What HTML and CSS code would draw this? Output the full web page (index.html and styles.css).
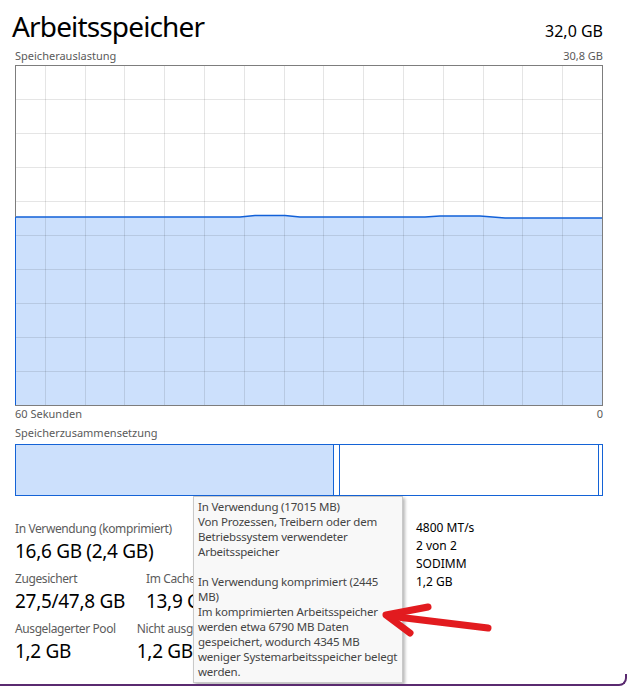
FILE: index.html
```html
<!DOCTYPE html>
<html lang="de">
<head>
<meta charset="utf-8">
<title>Arbeitsspeicher</title>
<link rel="stylesheet" href="styles.css">
</head>
<body>
<div class="window">
  <header class="head">
    <h1 class="title">Arbeitsspeicher</h1>
    <span class="total">32,0 GB</span>
  </header>
  <div class="cap-row top-cap"><span>Speicherauslastung</span><span>30,8 GB</span></div>
  <svg class="graph" width="588" height="341" viewBox="0 0 588 341" aria-label="Speicherauslastung Verlauf">
    <rect x="0" y="0" width="588" height="341" fill="#ffffff"/>
    <path class="fill" d="M0.5 152 L225 152 L240 150.5 L270 150.5 L285 152 L410 152 L425 151 L465 151 L490 153 L587.5 153 L587.5 340.5 L0.5 340.5 Z"/>
    <g class="grid">
      <line x1="30.5" y1="0" x2="30.5" y2="341"/>
      <line x1="70.5" y1="0" x2="70.5" y2="341"/>
      <line x1="109.5" y1="0" x2="109.5" y2="341"/>
      <line x1="149.5" y1="0" x2="149.5" y2="341"/>
      <line x1="189.5" y1="0" x2="189.5" y2="341"/>
      <line x1="229.5" y1="0" x2="229.5" y2="341"/>
      <line x1="269.5" y1="0" x2="269.5" y2="341"/>
      <line x1="308.5" y1="0" x2="308.5" y2="341"/>
      <line x1="348.5" y1="0" x2="348.5" y2="341"/>
      <line x1="388.5" y1="0" x2="388.5" y2="341"/>
      <line x1="428.5" y1="0" x2="428.5" y2="341"/>
      <line x1="468.5" y1="0" x2="468.5" y2="341"/>
      <line x1="507.5" y1="0" x2="507.5" y2="341"/>
      <line x1="547.5" y1="0" x2="547.5" y2="341"/>
      <line x1="0" y1="34.5" x2="588" y2="34.5"/>
      <line x1="0" y1="68.5" x2="588" y2="68.5"/>
      <line x1="0" y1="102.5" x2="588" y2="102.5"/>
      <line x1="0" y1="136.5" x2="588" y2="136.5"/>
      <line x1="0" y1="170.5" x2="588" y2="170.5"/>
      <line x1="0" y1="204.5" x2="588" y2="204.5"/>
      <line x1="0" y1="238.5" x2="588" y2="238.5"/>
      <line x1="0" y1="272.5" x2="588" y2="272.5"/>
      <line x1="0" y1="306.5" x2="588" y2="306.5"/>
    </g>
    <path class="line" d="M0.5 152 L225 152 L240 150.5 L270 150.5 L285 152 L410 152 L425 151 L465 151 L490 153 L587.5 153"/>
    <rect class="frame" x="0.5" y="0.5" width="587" height="340"/>
    <line class="edge" x1="0.5" y1="152" x2="0.5" y2="340"/>
  </svg>
  <div class="cap-row axis"><span>60 Sekunden</span><span>0</span></div>
  <div class="cap-row comp-label"><span>Speicherzusammensetzung</span></div>
  <div class="compbar">
    <div class="seg inuse"></div>
    <div class="seg modified"></div>
    <div class="seg standby"></div>
    <div class="seg free"></div>
  </div>
  <section class="details">
    <div class="stats">
      <div class="row">
        <div class="stat"><div class="label">In Verwendung (komprimiert)</div><div class="value">16,6 GB (2,4 GB)</div></div>
      </div>
      <div class="row">
        <div class="stat"><div class="label">Zugesichert</div><div class="value">27,5/47,8 GB</div></div>
        <div class="stat"><div class="label">Im Cache</div><div class="value">13,9 GB</div></div>
      </div>
      <div class="row">
        <div class="stat"><div class="label">Ausgelagerter Pool</div><div class="value">1,2 GB</div></div>
        <div class="stat"><div class="label">Nicht ausgelagerter Pool</div><div class="value">1,2 GB</div></div>
      </div>
    </div>
    <ul class="specs">
      <li>4800 MT/s</li>
      <li>2 von 2</li>
      <li>SODIMM</li>
      <li>1,2 GB</li>
    </ul>
  </section>
  <div class="tooltip">In Verwendung (17015 MB)<br>Von Prozessen, Treibern oder dem<br>Betriebssystem verwendeter<br>Arbeitsspeicher<br><br>In Verwendung komprimiert (2445<br>MB)<br>Im komprimierten Arbeitsspeicher<br>werden etwa 6790 MB Daten<br>gespeichert, wodurch 4345 MB<br>weniger Systemarbeitsspeicher belegt<br>werden.</div>
  <svg class="arrow" width="115" height="40" viewBox="0 0 115 40" aria-hidden="true">
    <path d="M48 7 L6 15 L30 33" />
    <path d="M9 16 L108 28" />
  </svg>
  <div class="frame-edge"></div>
</div>
</body>
</html>
```

FILE: styles.css
```css
html, body {
  margin: 0;
  padding: 0;
  background: #ffffff;
}

body {
  font-family: "Segoe UI", "Noto Sans", "Open Sans", sans-serif;
  color: #000000;
}

.window {
  position: relative;
  width: 627px;
  height: 686px;
  box-sizing: border-box;
  padding: 8px 24px 0 15px;
  overflow: hidden;
}

.head {
  display: flex;
  justify-content: space-between;
  align-items: baseline;
  margin-left: -3px;
}

.title {
  margin: 0;
  font-size: 28px;
  font-weight: 400;
  line-height: 36px;
  letter-spacing: -0.85px;
}

.total {
  font-size: 16px;
}

.cap-row {
  display: flex;
  justify-content: space-between;
  font-size: 11px;
  line-height: 14px;
  color: #5a5a5a;
}

.top-cap {
  margin-top: 5px;
  margin-bottom: 2px;
}

.graph {
  display: block;
}

.graph .fill {
  fill: #cce0fc;
}

.graph .grid line {
  stroke: rgba(0, 0, 0, 0.1);
  stroke-width: 1;
}

.graph .line {
  fill: none;
  stroke: #1160d8;
  stroke-width: 1.5;
}

.graph .frame {
  fill: none;
  stroke: #7d7d7d;
  stroke-width: 1;
}

.graph .edge {
  stroke: #1160d8;
  stroke-width: 1;
}

.axis {
  margin-top: 1px;
}

.comp-label {
  margin-top: 5px;
  margin-bottom: 4px;
}

.compbar {
  display: flex;
  width: 588px;
  height: 52px;
  box-sizing: border-box;
  border: 1px solid #1463d6;
}

.seg {
  height: 100%;
  border-right: 1px solid #1463d6;
}

.seg.inuse {
  width: 317px;
  background: #cce0fc;
}

.seg.modified {
  width: 5px;
  background: #ffffff;
}

.seg.standby {
  width: 258px;
  background: #ffffff;
}

.seg.free {
  flex: 1;
  border-right: none;
}

.details {
  display: grid;
  grid-template-columns: 401px 1fr;
  align-items: start;
  margin-top: 24px;
}

.stats {
  display: flex;
  flex-direction: column;
  gap: 6px;
}

.row {
  display: flex;
  gap: 21px;
  white-space: nowrap;
}

.label {
  font-size: 12px;
  line-height: 17px;
  letter-spacing: -0.4px;
  color: #5c5c5c;
}

.value {
  font-size: 19px;
  line-height: 26px;
  letter-spacing: -0.3px;
  margin-top: 1px;
}

.specs {
  list-style: none;
  margin: -1px 0 0 0;
  padding: 0;
  font-size: 12px;
  line-height: 18px;
  white-space: nowrap;
}

.tooltip {
  position: absolute;
  left: 193px;
  top: 496px;
  width: 210px;
  height: 187px;
  box-sizing: border-box;
  padding: 2px 4px;
  background: #f8f8f8;
  border: 1px solid #c9c9c9;
  box-shadow: 2px 2px 3px rgba(0, 0, 0, 0.28);
  font-size: 11.5px;
  line-height: 15px;
  letter-spacing: -0.2px;
  color: #444444;
  white-space: nowrap;
}

.arrow {
  position: absolute;
  left: 380px;
  top: 600px;
  overflow: visible;
}

.arrow path {
  fill: none;
  stroke: #e21b1f;
  stroke-width: 7;
  stroke-linecap: round;
  stroke-linejoin: round;
}

.frame-edge {
  position: absolute;
  left: 0;
  right: 0;
  bottom: 0;
  height: 10px;
  border-bottom: 2px solid #5a2a70;
  border-right: 2px solid #5a2a70;
  border-bottom-right-radius: 8px;
}
```
